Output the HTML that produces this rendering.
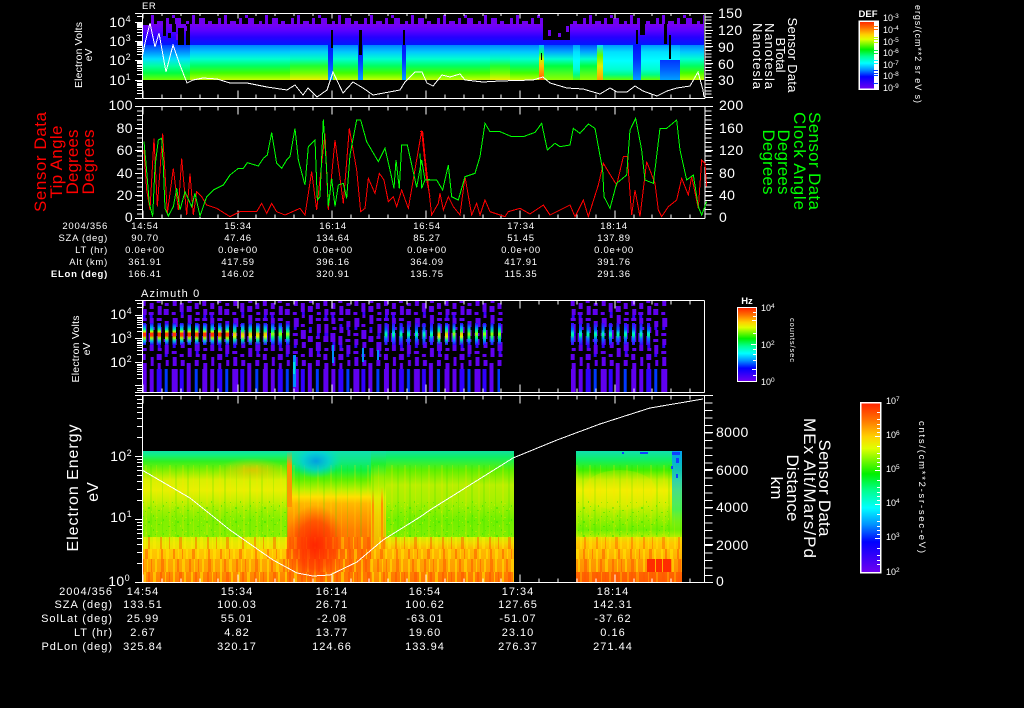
<!DOCTYPE html>
<html><head><meta charset="utf-8"><title>Sensor Data</title>
<style>
html,body{margin:0;padding:0;background:#000;width:1024px;height:708px;overflow:hidden}
svg{display:block;position:absolute;left:0;top:0}
text{font-family:"Liberation Sans",sans-serif;fill:#fff}
.t1 text{font-size:9.5px;letter-spacing:.75px;text-anchor:middle}
.t1 .l,.t2 .l{text-anchor:end}
.t2 text{font-size:11px;letter-spacing:1px;text-anchor:middle}
.ax text{font-size:14px;letter-spacing:.4px}
.ax tspan{font-size:9px}
.cb text{font-size:9px}
.cb tspan{font-size:6.5px}
.crisp *{shape-rendering:crispEdges}
.ln{fill:none;stroke-width:1;vector-effect:non-scaling-stroke;shape-rendering:crispEdges}
</style></head>
<body>
<svg width="1024" height="708" viewBox="0 0 1024 708" xmlns="http://www.w3.org/2000/svg">
<defs>
<linearGradient id="rb" x1="0" y1="0" x2="0" y2="1">
<stop offset="0" stop-color="#ff2000"/><stop offset=".1" stop-color="#ff7000"/><stop offset=".2" stop-color="#ffd000"/><stop offset=".27" stop-color="#e0ff00"/><stop offset=".42" stop-color="#00f000"/><stop offset=".52" stop-color="#00ff90"/><stop offset=".62" stop-color="#00ffff"/><stop offset=".72" stop-color="#0090ff"/><stop offset=".82" stop-color="#0000ff"/><stop offset="1" stop-color="#7000f0"/>
</linearGradient>
<linearGradient id="gP" gradientUnits="userSpaceOnUse" x1="0" y1="24" x2="0" y2="45">
<stop offset="0" stop-color="#7800f0"/><stop offset=".3" stop-color="#5c00ff"/><stop offset=".62" stop-color="#2800ff"/><stop offset="1" stop-color="#0018ff"/>
</linearGradient>
<linearGradient id="zL" gradientUnits="userSpaceOnUse" x1="0" y1="45" x2="0" y2="80">
<stop offset="0" stop-color="#0040ff"/><stop offset=".2" stop-color="#0090ff"/><stop offset=".4" stop-color="#00e0ff"/><stop offset=".6" stop-color="#00ffa0"/><stop offset=".8" stop-color="#00ff40"/><stop offset="1" stop-color="#70ff00"/>
</linearGradient>
<linearGradient id="zM" gradientUnits="userSpaceOnUse" x1="0" y1="45" x2="0" y2="80">
<stop offset="0" stop-color="#0080ff"/><stop offset=".2" stop-color="#00c8ff"/><stop offset=".4" stop-color="#00ffd0"/><stop offset=".6" stop-color="#00ff60"/><stop offset=".8" stop-color="#40ff00"/><stop offset="1" stop-color="#c8ff00"/>
</linearGradient>
<linearGradient id="zY" gradientUnits="userSpaceOnUse" x1="0" y1="45" x2="0" y2="80">
<stop offset="0" stop-color="#0088ff"/><stop offset=".2" stop-color="#00d0f8"/><stop offset=".4" stop-color="#00ffc0"/><stop offset=".6" stop-color="#20ff30"/><stop offset=".8" stop-color="#70ff00"/><stop offset="1" stop-color="#f0f000"/>
</linearGradient>
<linearGradient id="zB" gradientUnits="userSpaceOnUse" x1="0" y1="45" x2="0" y2="80">
<stop offset="0" stop-color="#0010ff"/><stop offset=".4" stop-color="#0030ff"/><stop offset=".7" stop-color="#0060ff"/><stop offset="1" stop-color="#00a0ff"/>
</linearGradient>
<linearGradient id="zC" gradientUnits="userSpaceOnUse" x1="0" y1="45" x2="0" y2="80">
<stop offset="0" stop-color="#0098ff"/><stop offset=".2" stop-color="#00e0ff"/><stop offset=".45" stop-color="#00ffff"/><stop offset=".7" stop-color="#00ffd0"/><stop offset=".85" stop-color="#00ff80"/><stop offset="1" stop-color="#60ff00"/>
</linearGradient>
<linearGradient id="zG" gradientUnits="userSpaceOnUse" x1="0" y1="45" x2="0" y2="80">
<stop offset="0" stop-color="#0050ff"/><stop offset=".2" stop-color="#00a8ff"/><stop offset=".4" stop-color="#00ffd0"/><stop offset=".6" stop-color="#00ff40"/><stop offset="1" stop-color="#90ff00"/>
</linearGradient>
<linearGradient id="zR" gradientUnits="userSpaceOnUse" x1="0" y1="45" x2="0" y2="80">
<stop offset="0" stop-color="#00c0ff"/><stop offset=".22" stop-color="#00ff80"/><stop offset=".4" stop-color="#c0ff00"/><stop offset=".6" stop-color="#ffc000"/><stop offset="1" stop-color="#ff6000"/>
</linearGradient>
<linearGradient id="zO" gradientUnits="userSpaceOnUse" x1="0" y1="45" x2="0" y2="80">
<stop offset="0" stop-color="#00e0ff"/><stop offset=".3" stop-color="#60ff00"/><stop offset=".6" stop-color="#e0f000"/><stop offset="1" stop-color="#ffa000"/>
</linearGradient>
<pattern id="top" patternUnits="userSpaceOnUse" x="142" y="15" width="73" height="9">
<path fill="#7000f0" d="M3 3h3v6h-3zM9 0h3v9h-3zM15 6h6v3h-6zM24 3h3v6h-3zM30 0h3v3h-3zM33 3h6v6h-6zM44 6h3v3h-3zM50 0h3v9h-3zM57 3h6v6h-6zM66 6h4v3h-4z"/>
</pattern>
<pattern id="d3" patternUnits="userSpaceOnUse" x="141.7" y="300" width="60.56" height="69">
<path fill="#6000f0" d="M0 0h4v6h-4zM1 9h4v6h-4zM0 18h5v3h-5zM1 24h4v9h-4zM0 36h5v6h-5zM1 48h4v3h-4zM0 54h4v6h-4zM1 63h4v6h-4z
M8 3h4v6h-4zM7 12h5v3h-5zM8 18h4v6h-4zM9 27h4v3h-4zM7 33h5v9h-5zM8 45h4v6h-4zM9 57h3v9h-3z
M15 0h4v3h-4zM16 6h4v9h-4zM15 18h5v3h-5zM16 27h4v6h-4zM15 36h4v9h-4zM16 48h4v3h-4zM15 54h5v6h-5zM16 63h3v6h-3z
M23 3h4v3h-4zM22 9h5v6h-5zM23 21h4v6h-4zM24 30h3v6h-3zM22 39h5v3h-5zM23 45h4v9h-4zM24 60h3v6h-3z
M31 0h4v6h-4zM30 12h4v3h-4zM31 18h5v9h-5zM30 33h5v3h-5zM31 39h4v6h-4zM30 51h5v3h-5zM31 57h4v9h-4z
M38 3h4v9h-4zM39 15h3v3h-3zM38 24h4v3h-4zM38 30h5v9h-5zM39 42h4v6h-4zM38 54h4v3h-4zM39 60h4v6h-4z
M46 0h4v3h-4zM45 6h5v6h-5zM46 15h4v9h-4zM46 30h3v3h-3zM45 36h5v6h-5zM46 48h4v9h-4zM45 63h4v6h-4z
M53 3h4v6h-4zM54 12h4v3h-4zM53 18h5v3h-5zM54 24h4v9h-4zM53 36h4v3h-4zM53 42h5v9h-5zM54 54h4v3h-4zM53 60h4v6h-4z"/>
<path fill="#3000ff" d="M1 15h3v3h-3zM1 33h4v3h-4zM8 15h3v3h-3zM9 42h3v3h-3zM16 24h3v3h-3zM16 45h3v3h-3zM23 27h3v3h-3zM23 54h3v3h-3zM31 27h3v3h-3zM31 45h3v3h-3zM39 12h3v3h-3zM46 27h3v3h-3zM54 33h3v3h-3zM54 51h3v3h-3z"/>
</pattern>
<pattern id="d3b" href="#d3" x="570.7"/>
<pattern id="b3" patternUnits="userSpaceOnUse" x="141.7" y="369" width="60.56" height="23">
<path fill="#6000f0" d="M0 0h5v23h-5zM8 0h4v23h-4zM30 0h6v23h-6zM45 0h4v23h-4z"/>
<path fill="#3000ff" d="M15 0h5v23h-5zM38 0h4v23h-4z"/>
<path fill="#0038ff" d="M23 0h3v23h-3zM53 0h3v23h-3z"/>
</pattern>
<pattern id="b3b" href="#b3" x="570.7"/>
<linearGradient id="cR" gradientUnits="userSpaceOnUse" x1="0" y1="323" x2="0" y2="345">
<stop offset="0" stop-color="#3000ff"/><stop offset=".18" stop-color="#0090ff"/><stop offset=".3" stop-color="#00f0a0"/><stop offset=".4" stop-color="#c0ff00"/><stop offset=".47" stop-color="#ff3000"/><stop offset=".58" stop-color="#ff4000"/><stop offset=".68" stop-color="#a0ff00"/><stop offset=".82" stop-color="#00c0e0"/><stop offset="1" stop-color="#3000ff"/>
</linearGradient>
<linearGradient id="cY" gradientUnits="userSpaceOnUse" x1="0" y1="323" x2="0" y2="345">
<stop offset="0" stop-color="#3000ff"/><stop offset=".2" stop-color="#00a0ff"/><stop offset=".36" stop-color="#00ff80"/><stop offset=".5" stop-color="#ffc000"/><stop offset=".62" stop-color="#d0ff00"/><stop offset=".78" stop-color="#00e0b0"/><stop offset="1" stop-color="#3000ff"/>
</linearGradient>
<linearGradient id="cG" gradientUnits="userSpaceOnUse" x1="0" y1="323" x2="0" y2="345">
<stop offset="0" stop-color="#3000ff"/><stop offset=".22" stop-color="#0090ff"/><stop offset=".38" stop-color="#00ff80"/><stop offset=".5" stop-color="#a0ff00"/><stop offset=".65" stop-color="#00ff70"/><stop offset=".8" stop-color="#0090ff"/><stop offset="1" stop-color="#3000ff"/>
</linearGradient>
<linearGradient id="cC" gradientUnits="userSpaceOnUse" x1="0" y1="323" x2="0" y2="345">
<stop offset="0" stop-color="#4000ff"/><stop offset=".3" stop-color="#0060ff"/><stop offset=".45" stop-color="#00e0e0"/><stop offset=".55" stop-color="#00ff90"/><stop offset=".7" stop-color="#0080ff"/><stop offset="1" stop-color="#4000ff"/>
</linearGradient>
<linearGradient id="sA" gradientUnits="userSpaceOnUse" x1="0" y1="451" x2="0" y2="582">
<stop offset="0" stop-color="#10e0a8"/><stop offset=".03" stop-color="#10f080"/><stop offset=".08" stop-color="#30f020"/><stop offset=".145" stop-color="#80f000"/><stop offset=".22" stop-color="#d8f000"/><stop offset=".3" stop-color="#e8f000"/><stop offset=".38" stop-color="#c8f000"/><stop offset=".45" stop-color="#a0f000"/><stop offset=".53" stop-color="#80f000"/><stop offset=".656" stop-color="#88f000"/><stop offset=".656" stop-color="#d0f000"/><stop offset=".70" stop-color="#e8e800"/><stop offset=".748" stop-color="#f0e000"/><stop offset=".748" stop-color="#ffc800"/><stop offset=".824" stop-color="#ffc000"/><stop offset=".824" stop-color="#ffa800"/><stop offset=".924" stop-color="#ffa000"/><stop offset=".924" stop-color="#ff8c00"/><stop offset="1" stop-color="#ff8000"/>
</linearGradient>
<linearGradient id="sB" gradientUnits="userSpaceOnUse" x1="0" y1="451" x2="0" y2="582">
<stop offset="0" stop-color="#10e0b0"/><stop offset=".08" stop-color="#10e880"/><stop offset=".145" stop-color="#10f040"/><stop offset=".22" stop-color="#60f000"/><stop offset=".3" stop-color="#c0f000"/><stop offset=".35" stop-color="#ffe000"/><stop offset=".4" stop-color="#ffb800"/><stop offset=".49" stop-color="#ff9c00"/><stop offset=".6" stop-color="#ff8000"/><stop offset=".75" stop-color="#ff7000"/><stop offset="1" stop-color="#ff7800"/>
</linearGradient>
<linearGradient id="sF" gradientUnits="userSpaceOnUse" x1="0" y1="451" x2="0" y2="582">
<stop offset="0" stop-color="#10e0a8"/><stop offset=".1" stop-color="#20f030"/><stop offset=".2" stop-color="#90f000"/><stop offset=".35" stop-color="#e0f000"/><stop offset=".5" stop-color="#f0d000"/><stop offset=".656" stop-color="#f0c000"/><stop offset=".748" stop-color="#ffb000"/><stop offset="1" stop-color="#ff8800"/>
</linearGradient>
<linearGradient id="sC" gradientUnits="userSpaceOnUse" x1="0" y1="451" x2="0" y2="582">
<stop offset="0" stop-color="#10e0a0"/><stop offset=".05" stop-color="#10f060"/><stop offset=".145" stop-color="#60f000"/><stop offset=".26" stop-color="#b8f000"/><stop offset=".38" stop-color="#a8f000"/><stop offset=".53" stop-color="#70f000"/><stop offset=".656" stop-color="#80f000"/><stop offset=".656" stop-color="#d0f000"/><stop offset=".70" stop-color="#f0d800"/><stop offset=".748" stop-color="#ffb800"/><stop offset=".824" stop-color="#ffb000"/><stop offset=".824" stop-color="#ffa400"/><stop offset=".924" stop-color="#ff9c00"/><stop offset=".924" stop-color="#ff8000"/><stop offset="1" stop-color="#ff7800"/>
</linearGradient>
<linearGradient id="sD" gradientUnits="userSpaceOnUse" x1="0" y1="451" x2="0" y2="582">
<stop offset="0" stop-color="#10e0b0"/><stop offset=".07" stop-color="#10f060"/><stop offset=".145" stop-color="#40f000"/><stop offset=".22" stop-color="#c0f000"/><stop offset=".3" stop-color="#f0f000"/><stop offset=".41" stop-color="#d0f000"/><stop offset=".53" stop-color="#90f000"/><stop offset=".6" stop-color="#70f000"/><stop offset=".656" stop-color="#b0f000"/><stop offset=".656" stop-color="#e8e000"/><stop offset=".70" stop-color="#ffc800"/><stop offset=".824" stop-color="#ffb000"/><stop offset=".824" stop-color="#ff9c00"/><stop offset=".924" stop-color="#ff9000"/><stop offset=".924" stop-color="#ff6400"/><stop offset="1" stop-color="#ff5c00"/>
</linearGradient>
<linearGradient id="sE" gradientUnits="userSpaceOnUse" x1="0" y1="451" x2="0" y2="535">
<stop offset="0" stop-color="#0090ff" stop-opacity=".8"/><stop offset=".35" stop-color="#00c8e0" stop-opacity=".75"/><stop offset=".7" stop-color="#00f080" stop-opacity=".6"/><stop offset="1" stop-color="#80f000" stop-opacity="0"/>
</linearGradient>
<linearGradient id="sS" x1="0" y1="0" x2="0" y2="1">
<stop offset="0" stop-color="#ffa000" stop-opacity=".1"/><stop offset=".25" stop-color="#ff9000"/><stop offset="1" stop-color="#ff9000" stop-opacity=".9"/>
</linearGradient>
<radialGradient id="rR"><stop offset="0" stop-color="#ff2000" stop-opacity=".95"/><stop offset=".6" stop-color="#ff3000" stop-opacity=".6"/><stop offset="1" stop-color="#ff5000" stop-opacity="0"/></radialGradient>
<radialGradient id="rB"><stop offset="0" stop-color="#0090f0" stop-opacity=".85"/><stop offset=".5" stop-color="#00c8e8" stop-opacity=".7"/><stop offset="1" stop-color="#00e0d0" stop-opacity="0"/></radialGradient>
<radialGradient id="rO"><stop offset="0" stop-color="#ffb800" stop-opacity=".7"/><stop offset="1" stop-color="#ffd000" stop-opacity="0"/></radialGradient>
<pattern id="st" patternUnits="userSpaceOnUse" x="142" y="0" width="47" height="60">
<path fill="#ffee00" d="M2 0h2v60h-2zM11 0h3v60h-3zM23 0h1v60h-1zM31 0h2v60h-2zM42 0h2v60h-2z"/>
<path fill="#ff5000" d="M6 0h2v60h-2zM18 0h2v60h-2zM27 0h1v60h-1zM37 0h3v60h-3z"/>
</pattern>
<pattern id="st2" href="#st" x="155"/>
<pattern id="st3" href="#st" x="171"/>
<pattern id="gn" patternUnits="userSpaceOnUse" x="142" y="500" width="29" height="14">
<path fill="#30e000" d="M1 2h1v1h-1zM6 7h2v2h-2zM11 1h1v2h-1zM16 10h2v1h-2zM21 5h1v2h-1zM26 12h2v1h-2zM3 11h1v1h-1zM24 2h1v1h-1zM13 6h1v1h-1z"/>
<path fill="#d0f000" d="M4 4h1v2h-1zM9 11h1v2h-1zM14 3h2v1h-2zM19 8h1v2h-1zM27 6h1v1h-1zM1 8h1v1h-1z"/>
</pattern>
<pattern id="vs" patternUnits="userSpaceOnUse" x="142" y="0" width="37" height="100">
<path fill="#ffe000" fill-opacity=".2" d="M3 0h2v100h-2zM14 0h1v100h-1zM27 0h2v100h-2z"/>
<path fill="#10e000" fill-opacity=".16" d="M8 0h2v100h-2zM20 0h1v100h-1zM33 0h2v100h-2z"/>
</pattern>
<clipPath id="cp4"><path d="M142 451h372v131h-372zM576 451h106v131h-106z"/></clipPath>
<g id="tb" stroke="#fff" stroke-width="1" fill="none"><path d="M143 0v-8M162 0v-4M181 0v-4M200 0v-4M218 0v-4M238 0v-8M256 0v-4M275 0v-4M294 0v-4M313 0v-4M332 0v-8M351 0v-4M369 0v-4M388 0v-4M407 0v-4M426 0v-8M445 0v-4M464 0v-4M483 0v-4M501 0v-4M520 0v-8M539 0v-4M558 0v-4M577 0v-4M596 0v-4M615 0v-8M634 0v-4M652 0v-4M671 0v-4M690 0v-4"/></g>
</defs>

<rect width="1024" height="708" fill="#000"/>

<g class="crisp">
<!-- panel 1 spectrogram -->
<rect x="142" y="15" width="562" height="9" fill="url(#top)"/>
<rect x="142" y="24" width="562" height="21" fill="url(#gP)"/>
<rect x="142" y="45" width="48" height="35" fill="url(#zL)"/>
<rect x="190" y="45" width="100" height="35" fill="url(#zM)"/>
<rect x="290" y="45" width="38" height="35" fill="url(#zY)"/>
<rect x="328" y="45" width="5" height="35" fill="url(#zB)"/>
<rect x="333" y="45" width="25" height="35" fill="url(#zM)"/>
<rect x="358" y="45" width="5" height="35" fill="url(#zB)"/>
<rect x="363" y="45" width="39" height="35" fill="url(#zM)"/>
<rect x="402" y="45" width="4" height="35" fill="url(#zB)"/>
<rect x="406" y="45" width="84" height="35" fill="url(#zM)"/>
<rect x="490" y="45" width="20" height="35" fill="url(#zY)"/>
<rect x="510" y="45" width="29" height="35" fill="url(#zM)"/>
<rect x="539" y="45" width="5" height="35" fill="url(#zR)"/>
<rect x="544" y="45" width="29" height="35" fill="url(#zG)"/>
<rect x="573" y="45" width="7" height="35" fill="url(#zC)"/>
<rect x="580" y="45" width="17" height="35" fill="url(#zG)"/>
<rect x="597" y="45" width="6" height="35" fill="url(#zO)"/>
<rect x="603" y="45" width="30" height="35" fill="url(#zC)"/>
<rect x="633" y="45" width="8" height="35" fill="url(#zB)"/>
<rect x="641" y="45" width="19" height="35" fill="url(#zC)"/>
<rect x="660" y="45" width="20" height="35" fill="url(#zB)"/>
<rect x="680" y="45" width="24" height="35" fill="url(#zM)"/>
<rect x="660" y="45" width="20" height="15" fill="url(#zC)"/>
<path fill="#000" d="M142 15h9v10h-9zM163 24h3v12h-3zM168 33h3v5h-3zM172 24h4v8h-4zM178 28h6v17h-6zM186 24h4v21h-4zM331 30h2v18h-2zM359 30h3v25h-3zM403 30h2v15h-2zM543 15h27v25h-27zM636 30h2v14h-2zM640 15h5v20h-5zM664 24h3v20h-3zM669 35h2v24h-2zM541 53h1v7h-1z"/>
<path fill="#7000f0" d="M548 30h3v6h-3zM558 33h3v4h-3zM566 26h3v6h-3zM184 26h3v5h-3zM176 34h2v6h-2zM645 24h3v6h-3z"/>
<!-- panel 3 -->
<rect x="142" y="300" width="361" height="69" fill="url(#d3)"/>
<rect x="570" y="300" width="98" height="69" fill="url(#d3b)"/>
<rect x="142" y="369" width="358" height="23" fill="url(#b3)"/>
<rect x="571" y="369" width="97" height="23" fill="url(#b3b)"/>
<path fill="url(#cR)" d="M142.5 323h3.5v22h-3.500zM150 323h3.500v22h-3.500zM157.5 323h3.500v22h-3.500zM165 323h3.500v22h-3.500zM172.500 323h3.500v22h-3.500zM180 323h3.500v22h-3.500zM187.500 323h3.500v22h-3.500zM195 323h3.500v22h-3.500zM203 323h3.500v22h-3.500zM210.500 323h3.500v22h-3.500zM218 323h3.500v22h-3.500zM225.500 323h3.500v22h-3.500z"/>
<path fill="url(#cY)" d="M233 323h3.500v22h-3.500zM241 323h3.500v22h-3.500zM248.500 323h3.500v22h-3.500zM256 323h3.500v22h-3.500zM263.500 323h3.500v22h-3.500zM437.500 323h3v22h-3zM445 323h3v22h-3zM460 323h3v22h-3z"/>
<path fill="url(#cG)" d="M271 323h3.500v22h-3.500zM278.500 323h3.500v22h-3.500zM286 323h3.500v22h-3.500zM452.500 323h3v22h-3zM467.500 323h3v22h-3zM475 323h3v22h-3zM483 323h3v22h-3zM490.500 323h3v22h-3zM498 323h3v22h-3z"/>
<path fill="url(#cC)" d="M384.500 323h3v22h-3zM392 323h3v22h-3zM399.500 323h3v22h-3zM407 323h3v22h-3zM415 323h3v22h-3zM422.500 323h3v22h-3zM430 323h3v22h-3zM571 323h3v22h-3zM579 323h3v22h-3zM586.500 323h3v22h-3zM594 323h3v22h-3zM601.500 323h3v22h-3zM609 323h3v22h-3zM616.500 323h3v22h-3zM624 323h3v22h-3zM632 323h3v22h-3zM639.500 323h3v22h-3zM647 323h3v22h-3z"/>
<path fill="#0090ff" d="M293 355h3v32h-3zM332 345h2v18h-2zM362 348h2v14h-2zM377 350h2v10h-2z"/>
<path fill="#00e0e0" d="M293 362h2v12h-2z"/>
<!-- panel 4 spectrogram -->
<rect x="142" y="451" width="145" height="131" fill="url(#sA)"/>
<rect x="287" y="451" width="84" height="131" fill="url(#sB)"/>
<rect x="371" y="451" width="15" height="131" fill="url(#sF)"/>
<rect x="386" y="451" width="128" height="131" fill="url(#sC)"/>
<rect x="576" y="451" width="106" height="131" fill="url(#sD)"/>
<rect x="142" y="465" width="372" height="72" fill="url(#vs)"/>
<rect x="576" y="465" width="106" height="72" fill="url(#vs)"/>
<rect x="142" y="500" width="145" height="37" fill="url(#gn)" opacity=".5"/>
<rect x="386" y="500" width="128" height="37" fill="url(#gn)" opacity=".5"/>
<rect x="576" y="500" width="94" height="37" fill="url(#gn)" opacity=".5"/>
<rect x="142" y="537" width="372" height="12" fill="url(#st)" opacity=".45"/>
<rect x="142" y="549" width="372" height="10" fill="url(#st2)" opacity=".5"/>
<rect x="142" y="559" width="372" height="13" fill="url(#st3)" opacity=".5"/>
<rect x="142" y="572" width="372" height="10" fill="url(#st)" opacity=".55"/>
<rect x="576" y="537" width="106" height="12" fill="url(#st2)" opacity=".4"/>
<rect x="576" y="549" width="106" height="10" fill="url(#st)" opacity=".5"/>
<rect x="576" y="559" width="106" height="13" fill="url(#st3)" opacity=".5"/>
<rect x="576" y="572" width="106" height="10" fill="url(#st2)" opacity=".3"/>
<rect x="672" y="451" width="10" height="84" fill="url(#sE)"/>
<path fill="#ff2c00" d="M647 559h24v13h-24z"/>
<path fill="#ffb000" d="M655 559h1v13h-1zM662 559h1v13h-1z"/>
<path fill="#1040ff" d="M672 452h8v3h-8zM676 458h3v5h-3zM671 466h2v3h-2zM676 474h2v4h-2zM622 452h2v2h-2zM640 452h8v2h-8z"/>
<rect x="287" y="452" width="5" height="55" fill="url(#sS)"/>
<rect x="372" y="490" width="2" height="60" fill="url(#sS)"/>
<rect x="381" y="488" width="2" height="62" fill="url(#sS)"/>
</g>
<g clip-path="url(#cp4)">
<ellipse cx="315" cy="545" rx="30" ry="40" fill="url(#rR)"/>
<ellipse cx="316" cy="461" rx="26" ry="17" fill="url(#rB)"/>
<ellipse cx="252" cy="470" rx="34" ry="12" fill="url(#rO)"/>
<ellipse cx="620" cy="490" rx="36" ry="20" fill="#ffe800" opacity=".2"/>
</g>

<g class="crisp" stroke="#fff" fill="none">
<!-- frames -->
<path d="M142.500 13.500H705M142.500 98.500H705M142.500 13.500V98.500M705 13.500V98.500"/>
<path d="M135 106.500H713M135 218.500H705M142.500 106.500V218.500M705 106.500V218.500"/>
<path d="M135 300.500H704.500M135 392.500H704.500M142.500 300.500V392.500M704.500 300.500V392.500"/>
<path d="M135 395.500H713M135 582.500H713M142.500 395.500V582.500M704.500 395.500V582.500"/>
<!-- panel 1 left log ticks -->
<path d="M135 22.500h7M135 41.500h7M135 60.500h7M135 80.500h7M135 13.500h7M135 98.500h7"/>
<path d="M137 16.500h5M137 35.500h5M137 32.500h5M137 29.500h5M137 27.500h5M137 26.500h5M137 25.500h5M137 24.500h5M137 23.500h5M137 54.500h5M137 51.500h5M137 49.500h5M137 47.500h5M137 45.500h5M137 44.500h5M137 43.500h5M137 42.500h5M137 74.500h5M137 70.500h5M137 68.500h5M137 66.500h5M137 65.500h5M137 63.500h5M137 62.500h5M137 61.500h5M137 93.500h5M137 90.500h5M137 87.500h5M137 85.500h5M137 84.500h5M137 83.500h5M137 81.500h5"/>
<!-- panel 1 right -->
<path d="M708.500 13V98" stroke-width="6" stroke-dasharray="1 2.36"/>
<path d="M705 13.500h8M705 30.500h8M705 46.500h8M705 63.500h8M705 80.500h8M705 97.500h8"/>
<!-- panel 2 -->
<path d="M139.500 106V218" stroke-width="5" stroke-dasharray="1 3.48"/>
<path d="M135 128.500h7M135 150.500h7M135 173.500h7M135 195.500h7"/>
<path d="M708.500 106V218" stroke-width="6" stroke-dasharray="1 3.48"/>
<path d="M705 128.500h8M705 150.500h8M705 173.500h8M705 195.500h8"/>
<!-- panel 3 left -->
<path d="M135 315.500h7M135 338.500h7M135 362.500h7M135 385.500h7"/>
<path d="M137 307.500h5M137 303.500h5M137 331.500h5M137 327.500h5M137 324.500h5M137 322.500h5M137 320.500h5M137 318.500h5M137 317.500h5M137 354.500h5M137 350.500h5M137 347.500h5M137 345.500h5M137 343.500h5M137 342.500h5M137 340.500h5M137 378.500h5M137 374.500h5M137 371.500h5M137 369.500h5M137 367.500h5M137 365.500h5M137 364.500h5M137 388.500h5M137 390.500h5"/>
<!-- panel 4 left -->
<path d="M135 456.500h7M135 519.500h7"/>
<path d="M137 437.500h5M137 426.500h5M137 418.500h5M137 412.500h5M137 407.500h5M137 403.500h5M137 399.500h5M137 500.500h5M137 489.500h5M137 481.500h5M137 475.500h5M137 470.500h5M137 466.500h5M137 462.500h5M137 459.500h5M137 563.500h5M137 552.500h5M137 544.500h5M137 538.500h5M137 533.500h5M137 529.500h5M137 525.500h5M137 522.500h5"/>
<!-- panel 4 right -->
<path d="M708.500 395V582" stroke-width="8" stroke-dasharray="1 6.5"/>
<path d="M704 432.500h9M704 469.500h9M704 507.500h9M704 544.500h9"/>
</g>

<g class="crisp">
<use href="#tb" transform="translate(0,98.500)"/>
<use href="#tb" transform="translate(0,13.500) scale(1,-.6)"/>
<use href="#tb" transform="translate(0,218.500)"/>
<use href="#tb" transform="translate(0,106.500) scale(1,-1)"/>
<use href="#tb" transform="translate(0,392.500)"/>
<use href="#tb" transform="translate(0,300.500) scale(1,-1)"/>
<use href="#tb" transform="translate(0,582.500)"/>
<use href="#tb" transform="translate(0,395.500) scale(1,-1)"/>
</g>

<!-- lines -->
<polyline class="ln" stroke="#fff" points="142,58 145,43 150,23 155,47 159,33 166,72 173,45 180,65 187,83 193,80 203,78 217,79 230,83 247,83 267,87 287,90 295,85 303,95 308,88 317,97 327,90 333,72 343,93 353,82 363,88 373,95 400,90 405,82 415,72 422,72 427,83 433,86 442,75 450,77 460,74 465,80 483,82 500,81 533,80 543,77 550,83 567,88 583,89 600,94 610,88 617,92 627,92 635,86 643,91 657,96 667,91 677,88 690,86 698,72 703,90 704,97"/>
<g transform="translate(130,100) scale(.33333)">
<polyline class="ln" stroke="#ff0000" points="42,150 50,270 60,330 72,115 82,320 98,100 112,340 130,205 145,330 155,175 170,345 180,220 190,345 200,275 215,290 230,315 260,325 300,350 330,335 380,335 395,310 410,340 425,310 440,335 465,345 510,325 525,345 545,215 560,330 585,100 595,330 615,120 640,310 658,85 680,210 692,335 705,325 715,235 735,280 748,220 762,240 775,305 790,290 800,320 815,270 835,325 875,92 890,240 900,290"/>
<polyline class="ln" stroke="#00ff00" points="42,125 48,190 58,310 68,350 75,200 85,120 95,115 100,200 105,325 115,348 130,320 140,265 150,330 165,275 185,320 195,280 210,348 230,290 250,270 280,255 300,225 325,205 340,205 352,188 385,198 400,175 412,165 425,98 440,190 455,205 470,180 480,170 495,85 505,180 525,255 535,140 555,120 562,300 570,290 580,58 590,210 595,320 605,235 615,320 625,255 640,250 650,295 660,165 680,60 692,60 710,125 745,185 765,145 780,210 792,265 798,180 808,265 815,135 832,135 860,262 875,180 885,240 900,238"/>
</g>
<g transform="translate(420,100) scale(.33333)">
<polyline class="ln" stroke="#ff0000" points="0,95 8,95 15,170 30,300 35,345 55,310 60,280 70,330 85,290 100,320 120,345 135,230 155,345 170,310 180,345 195,300 210,335 240,345 255,350 265,335 300,325 330,342 370,315 390,345 420,330 450,315 465,350 490,300 505,350 535,255 550,190 565,215 590,255 610,170 622,170 635,345 645,270 660,350 680,185 705,250 715,330 725,350 745,320 770,300 785,235 805,285 815,230 835,325 845,180 855,190 860,260"/>
<polyline class="ln" stroke="#00ff00" points="0,160 5,265 15,240 50,240 68,270 85,195 95,290 115,300 135,230 165,220 180,170 195,70 210,95 240,95 275,110 310,110 345,97 365,70 382,150 405,130 420,140 450,135 460,85 480,100 505,72 525,85 548,210 552,290 570,325 590,250 620,225 630,90 647,55 665,150 675,240 700,250 720,85 740,85 770,60 780,150 800,240 820,225 835,320 845,345 860,305"/>
</g>
<polyline class="ln" stroke="#fff" points="142,470 190,498 230,530 273,560 297,573 313,576 330,575 357,562 383,540 420,517 430,510 513,458 557,440 600,424 628,415 650,408 703,399"/>

<!-- colorbars -->
<rect x="859" y="21" width="19" height="68" fill="url(#rb)" stroke="#fff" stroke-width="1.500" shape-rendering="crispEdges"/>
<g shape-rendering="crispEdges">
<path fill="#fff" d="M874 21h4v68h-4z"/>
<path fill="#ff7000" d="M873 26h5v1h-5zM873 29h5v1h-5z"/>
<path fill="#c0ff00" d="M873 37h5v1h-5zM873 39h5v1h-5zM873 42h5v1h-5z"/>
<path fill="#00f040" d="M873 50h5v1h-5zM873 53h5v1h-5z"/>
<path fill="#00ffff" d="M873 60h5v1h-5zM873 63h5v1h-5z"/>
<path fill="#0040ff" d="M873 70h5v1h-5zM873 73h5v1h-5zM873 75h5v1h-5zM873 83h5v1h-5z"/>
<path fill="#ff2000" d="M874 22h4v3h-4z" opacity="0"/>
</g>
<rect x="737.500" y="307.500" width="19" height="74" fill="url(#rb)" stroke="#fff" stroke-width="1" shape-rendering="crispEdges"/>
<path stroke="#fff" fill="none" shape-rendering="crispEdges" d="M751 344.500h5M752 320.500h4M753 312.500h3M753 316.500h3M753 333.500h3M753 349.500h3M753 354.500h3M753 360.500h3M752 369.500h4M753 375.500h3"/>
<rect x="860.500" y="402.500" width="20" height="170" fill="url(#rb)" stroke="#fff" stroke-width="1.500" shape-rendering="crispEdges"/>
<path stroke="#fff" fill="none" shape-rendering="crispEdges" d="M875 436.500h5M875 470.500h5M875 504.500h5M875 538.500h5M877 412.500h3M877 419.500h3M877 424.500h3M877 428.500h3M877 432.500h3M877 446.500h3M877 453.500h3M877 458.500h3M877 462.500h3M877 466.500h3M877 480.500h3M877 487.500h3M877 492.500h3M877 496.500h3M877 500.500h3M877 514.500h3M877 521.500h3M877 526.500h3M877 530.500h3M877 534.500h3M877 548.500h3M877 555.500h3M877 560.500h3M877 564.500h3"/>

<!-- axis labels -->
<g class="ax">
<text x="131" y="27" text-anchor="end">10<tspan dy="-5">4</tspan></text>
<text x="131" y="46" text-anchor="end">10<tspan dy="-5">3</tspan></text>
<text x="131" y="65" text-anchor="end">10<tspan dy="-5">2</tspan></text>
<text x="131" y="85" text-anchor="end">10<tspan dy="-5">1</tspan></text>
<text x="718" y="18">150</text><text x="718" y="35">120</text><text x="718" y="52">90</text><text x="718" y="69">60</text><text x="718" y="85">30</text>
<text x="133" y="110" text-anchor="end">100</text><text x="133" y="133" text-anchor="end">80</text><text x="133" y="155" text-anchor="end">60</text><text x="133" y="178" text-anchor="end">40</text><text x="133" y="200" text-anchor="end">20</text><text x="133" y="222" text-anchor="end">0</text>
<text x="719" y="110">200</text><text x="719" y="133">160</text><text x="719" y="155">120</text><text x="719" y="178">80</text><text x="719" y="200">40</text><text x="719" y="222">0</text>
<text x="132" y="319" text-anchor="end">10<tspan dy="-5">4</tspan></text>
<text x="132" y="343" text-anchor="end">10<tspan dy="-5">3</tspan></text>
<text x="132" y="367" text-anchor="end">10<tspan dy="-5">2</tspan></text>
<text x="132" y="461" text-anchor="end">10<tspan dy="-5">2</tspan></text>
<text x="132" y="522" text-anchor="end">10<tspan dy="-5">1</tspan></text>
<text x="130" y="586" text-anchor="end">10<tspan dy="-5">0</tspan></text>
<text x="716" y="437">8000</text><text x="716" y="475">6000</text><text x="716" y="512">4000</text><text x="716" y="550">2000</text><text x="716" y="586">0</text>
</g>

<text x="142" y="9" font-size="9.500" letter-spacing=".5">ER</text>
<text x="141" y="297" font-size="11" letter-spacing=".8" textLength="59">Azimuth 0</text>

<!-- rotated labels -->
<text transform="translate(82,55) rotate(-90)" font-size="10.500" text-anchor="middle" textLength="66">Electron Volts</text>
<text transform="translate(92,55) rotate(-90)" font-size="10.500" text-anchor="middle">eV</text>
<text transform="translate(79,349) rotate(-90)" font-size="10.500" text-anchor="middle" textLength="67">Electron Volts</text>
<text transform="translate(90,349) rotate(-90)" font-size="10.500" text-anchor="middle">eV</text>
<text transform="translate(78,488) rotate(-90)" font-size="16" text-anchor="middle" textLength="127">Electron Energy</text>
<text transform="translate(98,492) rotate(-90)" font-size="16" text-anchor="middle">eV</text>

<g font-size="13">
<text transform="translate(788,55) rotate(90)" text-anchor="middle" font-size="13" textLength="75">Sensor Data</text>
<text transform="translate(776,55) rotate(90)" text-anchor="middle" font-size="13" textLength="35">BTotal</text>
<text transform="translate(765,56) rotate(90)" text-anchor="middle" font-size="13" textLength="66">Nanotesla</text>
<text transform="translate(753,56) rotate(90)" text-anchor="middle" font-size="13" textLength="66">Nanotesla</text>
</g>

<g style="font-size:17px">
<text style="fill:#f00" transform="translate(46,162) rotate(-90)" text-anchor="middle" font-size="17" textLength="100">Sensor Data</text>
<text style="fill:#f00" transform="translate(62,162) rotate(-90)" text-anchor="middle" font-size="17" textLength="73">Tip Angle</text>
<text style="fill:#f00" transform="translate(78,162) rotate(-90)" text-anchor="middle" font-size="17" textLength="65">Degrees</text>
<text style="fill:#f00" transform="translate(94,162) rotate(-90)" text-anchor="middle" font-size="17" textLength="65">Degrees</text>
<text style="fill:#0f0" transform="translate(809,161) rotate(90)" text-anchor="middle" font-size="17" textLength="98">Sensor Data</text>
<text style="fill:#0f0" transform="translate(794,161) rotate(90)" text-anchor="middle" font-size="17" textLength="98">Clock Angle</text>
<text style="fill:#0f0" transform="translate(778,162) rotate(90)" text-anchor="middle" font-size="17" textLength="65">Degrees</text>
<text style="fill:#0f0" transform="translate(763,162) rotate(90)" text-anchor="middle" font-size="17" textLength="65">Degrees</text>
</g>

<text transform="translate(819,488) rotate(90)" text-anchor="middle" font-size="17" textLength="97">Sensor Data</text>
<text transform="translate(804,488) rotate(90)" text-anchor="middle" font-size="17" textLength="140">MEx Alt/Mars/Pd</text>
<text transform="translate(787,488) rotate(90)" text-anchor="middle" font-size="17" textLength="67">Distance</text>
<text transform="translate(771,488) rotate(90)" text-anchor="middle" font-size="17" textLength="23">km</text>

<g class="cb">
<text x="868" y="17" text-anchor="middle" font-weight="bold" style="font-size:9.500px">DEF</text>
<text x="883" y="21">10<tspan dy="-3">-3</tspan></text><text x="883" y="33">10<tspan dy="-3">-4</tspan></text><text x="883" y="45">10<tspan dy="-3">-5</tspan></text><text x="883" y="56">10<tspan dy="-3">-6</tspan></text><text x="883" y="68">10<tspan dy="-3">-7</tspan></text><text x="883" y="79">10<tspan dy="-3">-8</tspan></text><text x="883" y="91">10<tspan dy="-3">-9</tspan></text>
<text transform="translate(915,54) rotate(90)" text-anchor="middle" textLength="98" style="font-size:9px">ergs/(cm**2 sr eV s)</text>
<text x="747" y="304" text-anchor="middle" font-weight="bold" style="font-size:9.500px">Hz</text>
<text x="761" y="311">10<tspan dy="-3">4</tspan></text><text x="761" y="348">10<tspan dy="-3">2</tspan></text><text x="761" y="385">10<tspan dy="-3">0</tspan></text>
<text transform="translate(790,340) rotate(90)" text-anchor="middle" textLength="44" style="font-size:7.500px">counts/sec</text>
<text x="886" y="404">10<tspan dy="-3">7</tspan></text><text x="886" y="438">10<tspan dy="-3">6</tspan></text><text x="886" y="472">10<tspan dy="-3">5</tspan></text><text x="886" y="506">10<tspan dy="-3">4</tspan></text><text x="886" y="540">10<tspan dy="-3">3</tspan></text><text x="886" y="575">10<tspan dy="-3">2</tspan></text>
<text transform="translate(919,487) rotate(90)" text-anchor="middle" textLength="132" style="font-size:9.500px">cnts/(cm**2-sr-sec-eV)</text>
</g>

<!-- table 1 -->
<g class="t1">
<text class="l" x="108" y="229">2004/356</text><text x="145" y="229">14:54</text><text x="238" y="229">15:34</text><text x="333" y="229">16:14</text><text x="427" y="229">16:54</text><text x="521" y="229">17:34</text><text x="614" y="229">18:14</text>
<text class="l" x="108" y="241">SZA (deg)</text><text x="145" y="241">90.70</text><text x="238" y="241">47.46</text><text x="333" y="241">134.64</text><text x="427" y="241">85.27</text><text x="521" y="241">51.45</text><text x="614" y="241">137.89</text>
<text class="l" x="108" y="253">LT (hr)</text><text x="145" y="253">0.0e+00</text><text x="238" y="253">0.0e+00</text><text x="333" y="253">0.0e+00</text><text x="427" y="253">0.0e+00</text><text x="521" y="253">0.0e+00</text><text x="614" y="253">0.0e+00</text>
<text class="l" x="108" y="265">Alt (km)</text><text x="145" y="265">361.91</text><text x="238" y="265">417.59</text><text x="333" y="265">396.16</text><text x="427" y="265">364.09</text><text x="521" y="265">417.91</text><text x="614" y="265">391.76</text>
<text class="l" x="108" y="277" font-weight="bold">ELon (deg)</text><text x="145" y="277">166.41</text><text x="238" y="277">146.02</text><text x="333" y="277">320.91</text><text x="427" y="277">135.75</text><text x="521" y="277">115.35</text><text x="614" y="277">291.36</text>
</g>

<!-- table 2 -->
<g class="t2">
<text class="l" x="113" y="595">2004/356</text><text x="143" y="595">14:54</text><text x="237" y="595">15:34</text><text x="332" y="595">16:14</text><text x="425" y="595">16:54</text><text x="518" y="595">17:34</text><text x="613" y="595">18:14</text>
<text class="l" x="113" y="608">SZA (deg)</text><text x="143" y="608">133.51</text><text x="237" y="608">100.03</text><text x="332" y="608">26.71</text><text x="425" y="608">100.62</text><text x="518" y="608">127.65</text><text x="613" y="608">142.31</text>
<text class="l" x="113" y="622">SolLat (deg)</text><text x="143" y="622">25.99</text><text x="237" y="622">55.01</text><text x="332" y="622">-2.08</text><text x="425" y="622">-63.01</text><text x="518" y="622">-51.07</text><text x="613" y="622">-37.62</text>
<text class="l" x="113" y="636">LT (hr)</text><text x="143" y="636">2.67</text><text x="237" y="636">4.82</text><text x="332" y="636">13.77</text><text x="425" y="636">19.60</text><text x="518" y="636">23.10</text><text x="613" y="636">0.16</text>
<text class="l" x="113" y="650">PdLon (deg)</text><text x="143" y="650">325.84</text><text x="237" y="650">320.17</text><text x="332" y="650">124.66</text><text x="425" y="650">133.94</text><text x="518" y="650">276.37</text><text x="613" y="650">271.44</text>
</g>
</svg>
</body></html>
